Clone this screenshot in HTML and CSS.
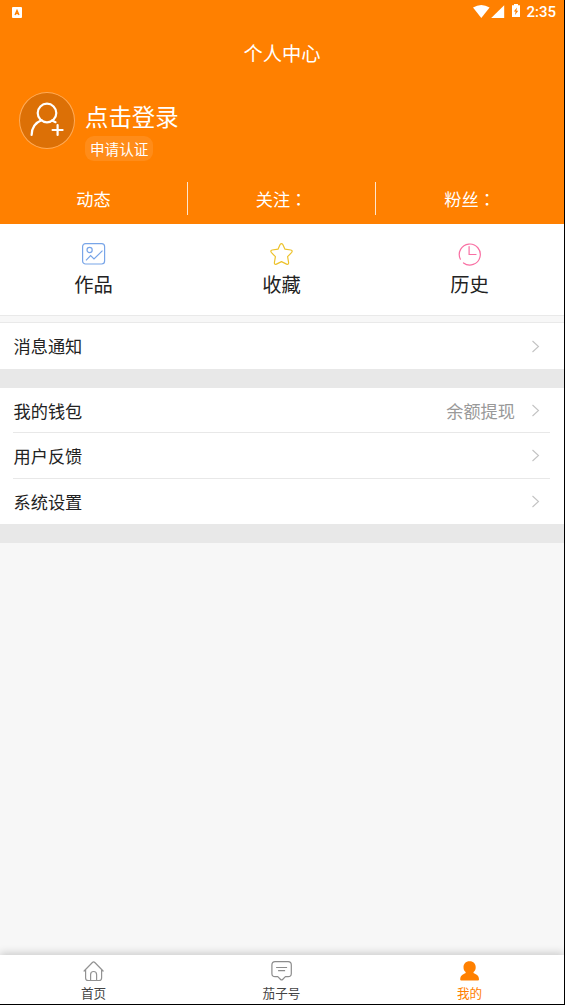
FILE: index.html
```html
<!DOCTYPE html>
<html lang="zh-CN">
<head>
<meta charset="utf-8">
<title>个人中心</title>
<link rel="stylesheet" href="styles.css">
</head>
<body>
<div class="screen">
  <header class="header">
    <div class="status">
      <svg class="status-app" width="10" height="11" viewBox="0 0 10 11"><rect width="10" height="11" rx="1" fill="#fff"/><path d="M3 8L5 3.4L7 8M3.8 6.5h2.4" fill="none" stroke="#ff8000" stroke-width="1.3"/></svg>
      <svg class="status-icons" width="48" height="16" viewBox="0 0 48 16"><path d="M0 3.6Q8.3-1.6 16.600 3.600L8.300 14Z" fill="#fff"/><path d="M31.200 1.200V14H18.200Z" fill="#fff"/><path d="M41 0h4v1.300h2V13h-8V1.300h2Z" fill="#fff"/><path d="M44 3.500L40.800 7.600H42.600L42 11L45.300 6.800H43.400Z" fill="#ff8000"/></svg>
      <span class="clock">2:35</span>
    </div>
    <h1 class="title">个人中心</h1>
    <div class="profile">
      <div class="avatar">
        <svg width="34" height="36" viewBox="0 0 34 36" fill="none" stroke="#fff" stroke-width="2.200" stroke-linecap="round"><circle cx="17" cy="11" r="9.300"/><path d="M11.500 18.200C5.500 20.500 1.700 25.500 1.600 33M22 18.600L25.500 20.200M22.600 28h10M27.600 23v10"/></svg>
      </div>
      <div class="account">
        <span class="login">点击登录</span>
        <span class="verify">申请认证</span>
      </div>
    </div>
    <div class="stats">
      <div class="stat">动态</div>
      <div class="stat">关注<span class="colon" lang="zh-TW">：</span></div>
      <div class="stat">粉丝<span class="colon" lang="zh-TW">：</span></div>
    </div>
  </header>
  <section class="shortcuts">
    <div class="shortcut">
      <svg width="24" height="24" viewBox="0 0 24 24" fill="none" stroke="#78a5e8" stroke-width="1.200"><rect x=".6" y="1.600" width="22" height="20.400" rx="3"/><circle cx="7.600" cy="8" r="2.600"/><path d="M4 18.300L8.600 13.600L12 17L20.500 8.600"/></svg>
      <span>作品</span>
    </div>
    <div class="shortcut">
      <svg width="24" height="24" viewBox="0.5 0 24 24" fill="none" stroke="#edc22b" stroke-width="1.200" stroke-linejoin="round"><path d="M10.600 2.500Q12 .6 13.300 2.500L15.500 7.200L21.300 8Q23.600 8.700 22 10.600L18.100 14.700L19.100 20.500Q19.200 22.900 17.100 22.100L12 19.600L6.900 22.100Q4.800 22.900 4.900 20.500L5.900 14.700L2 10.600Q.4 8.700 2.700 8L8.500 7.200Z"/></svg>
      <span>收藏</span>
    </div>
    <div class="shortcut">
      <svg width="24" height="24" viewBox="0.5 0 24 24" fill="none" stroke="#f96fa3" stroke-width="1.200" stroke-linecap="round"><path d="M2.900 17.200A10.500 10.500 0 1 1 6 20.900M11.600 4.500V12.500H18.500"/></svg>
      <span>历史</span>
    </div>
  </section>
  <section class="group group-notice">
    <div class="row"><span>消息通知</span><svg class="chevron" viewBox="0 0 8 13"><path d="M.5 1L6.500 6.500L.5 12"/></svg></div>
  </section>
  <section class="group">
    <div class="row"><span>我的钱包</span><span class="hint">余额提现</span><svg class="chevron" viewBox="0 0 8 13"><path d="M.5 1L6.500 6.500L.5 12"/></svg></div>
    <div class="row"><span>用户反馈</span><svg class="chevron" viewBox="0 0 8 13"><path d="M.5 1L6.500 6.500L.5 12"/></svg></div>
    <div class="row"><span>系统设置</span><svg class="chevron" viewBox="0 0 8 13"><path d="M.5 1L6.500 6.500L.5 12"/></svg></div>
  </section>
  <nav class="tabs">
    <div class="tab">
      <svg width="22" height="22" viewBox="0.4 0 22 22" fill="none" stroke="#929292" stroke-width="1.200" stroke-linejoin="round" stroke-linecap="round"><path d="M1.500 11L9.800 2.500Q11 1.300 12.200 2.500L20.500 11M3 10V18Q3 20.500 5.500 20.500H16.500Q19 20.500 19 18V10M8 20.500V14.500Q8 11.500 11 11.500T14 14.500V20.500"/></svg>
      <span>首页</span>
    </div>
    <div class="tab">
      <svg width="22" height="22" viewBox="0.4 0 22 22" fill="none" stroke="#8c8c8c" stroke-width="1.200" stroke-linejoin="round"><path d="M4.500 1.700H17.500Q20.700 1.700 20.700 4.900V13.500Q20.700 16.700 17.500 16.700H14.800L12 19.500Q11 20.500 10 19.500L7.200 16.700H4.500Q1.300 16.700 1.300 13.500V4.900Q1.300 1.700 4.500 1.700ZM5.500 7.500H16.500M7.500 10.700H14.500"/></svg>
      <span>茄子号</span>
    </div>
    <div class="tab tab-active">
      <svg width="22" height="22" viewBox="0.4 0 22 22" fill="#ff8000"><path d="M11 1.300C7 1.300 4.900 4 4.900 7.200C4.900 9.400 5.500 10.500 7 12C7.500 13 6.500 13.500 5.200 14C2.500 15.200 1.600 17 1.600 19.500Q1.600 20.500 2.600 20.500H19.400Q20.400 20.500 20.400 19.500C20.400 17 19.500 15.200 16.800 14C15.500 13.500 14.500 13 15 12C16.500 10.500 17.100 9.400 17.100 7.200C17.100 4 15 1.300 11 1.300Z"/></svg>
      <span>我的</span>
    </div>
  </nav>
</div>
</body>
</html>
```
FILE: styles.css
```css
* { box-sizing: border-box; }
body {
  margin: 0;
  background: #000;
  font-family: "Noto Sans CJK SC", sans-serif;
  color: #222;
}
.screen {
  display: flex;
  flex-direction: column;
  width: 564px;
  height: 1004px;
  background: #f7f7f7;
}
svg { display: block; flex: none; }
.header {
  display: flex;
  flex-direction: column;
  height: 224px;
  flex: none;
  background: #ff8000;
  color: #fff;
}
.status {
  display: flex;
  align-items: center;
  height: 24px;
  padding: 0 8px 0 12px;
}
.status-icons { margin: 0 5px 0 auto; }
.clock {
  font: 500 15px/24px Roboto, sans-serif;
}
.title {
  margin: 0;
  height: 60px;
  text-align: center;
  font-size: 19.3px;
  line-height: 58px;
  font-weight: 400;
}
.profile {
  display: flex;
  height: 98px;
  padding: 8px 19px 0;
  gap: 10px;
}
.avatar {
  display: flex;
  align-items: center;
  justify-content: center;
  width: 56px;
  height: 57px;
  border: 1px solid #ffab57;
  border-radius: 50%;
  background: #dc7006;
}
.avatar svg { margin-top: -1px; }
.account {
  display: flex;
  flex-direction: column;
  align-items: flex-start;
  padding-top: 7px;
}
.login {
  height: 37px;
  font-size: 23.4px;
  line-height: 34px;
}
.verify {
  height: 25px;
  padding: 0 5px;
  border-radius: 9px;
  background: #ff8c19;
  font-size: 14.600px;
  line-height: 25px;
}
.stats {
  display: grid;
  grid-template-columns: repeat(3, 188px);
  height: 33px;
}
.stat {
  text-align: center;
  font-size: 17.2px;
  line-height: 34px;
  height: 33px;
  border-right: 1px solid #ffe5cc;
}
.stat:last-child { border-right: 0; }
.colon { font-family: "Noto Sans CJK TC", sans-serif; }
.shortcuts {
  display: grid;
  grid-template-columns: repeat(3, 1fr);
  height: 92px;
  padding-top: 18px;
  flex: none;
  background: #fff;
  border-bottom: 1px solid #e9e9e9;
}
.shortcut {
  display: flex;
  flex-direction: column;
  align-items: center;
  font-size: 19.3px;
  line-height: 36px;
}
.shortcut span, .tab span { padding-right: 1px; }
.group {
  padding-left: 13px;
  padding-right: 14px;
  flex: none;
  background: #fff;
  border-bottom: 19px solid #e8e8e8;
}
.group-notice {
  margin-top: 6px;
  border-top: 1px solid #e9e9e9;
}
.row {
  display: flex;
  align-items: center;
  height: 46px;
  padding: 0 10px 0 .5px;
  font-size: 17.2px;
  line-height: 46px;
  border-bottom: 1px solid #e8e8e8;
}
.row:first-child { height: 45px; line-height: 47px; }
.row:last-child { height: 45px; border-bottom: 0; }
.group-notice .row { height: 46px; line-height: 48px; }
.hint {
  margin-left: auto;
  color: #999;
}
.chevron {
  width: 8px;
  height: 13px;
  margin-left: auto;
  fill: none;
  stroke: #c3c3c3;
  stroke-width: 1.100;
}
.hint + .chevron { margin-left: 17px; }
.tabs {
  display: grid;
  grid-template-columns: repeat(3, 1fr);
  height: 49px;
  margin-top: auto;
  padding-top: 5px;
  background: #fff;
  box-shadow: 0 -2px 8px rgba(0, 0, 0, .18);
  clip-path: inset(-12px 0 0 0);
}
.tab {
  display: flex;
  flex-direction: column;
  align-items: center;
  font-size: 12.600px;
  line-height: 22px;
  color: #444;
}
.tab-active { color: #ff8000; }
```
